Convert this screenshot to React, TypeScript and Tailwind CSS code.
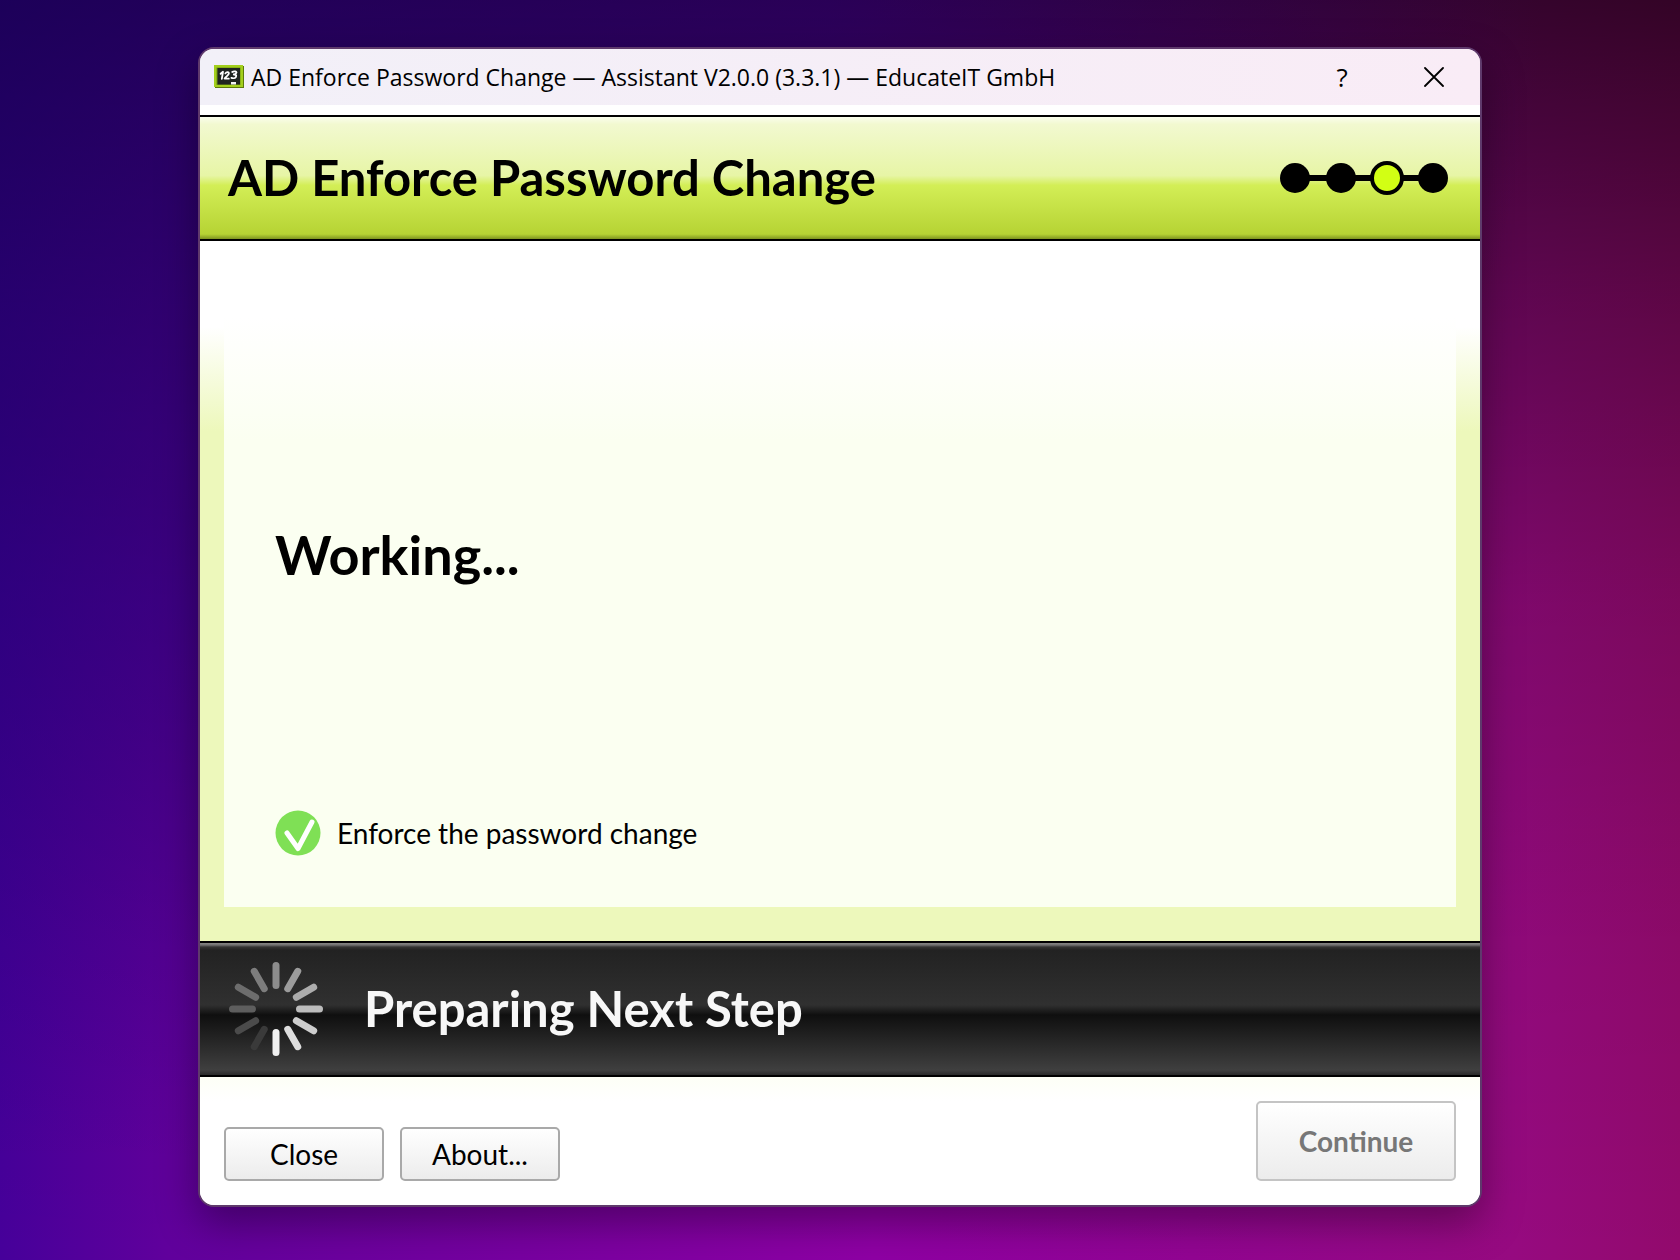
import React from 'react';

const STEPS = ['done', 'done', 'current', 'open'];

const SPOKES = [
  '#8c8c8c', '#9c9c9c', '#acacac', '#bcbcbc', '#cdcdcd', '#dedede',
  '#f0f0f0', '#3a3a3a', '#4b4b4b', '#5e5e5e', '#6d6d6d', '#7d7d7d'
];

function BoardIcon() {
  return <svg viewBox="0 0 30 24" className="h-6 w-[30px] shrink-0" aria-hidden="true">
      <rect x="1" y="1" width="29" height="22" fill="#5c7a0a" />
      <rect width="29" height="22" fill="#a3cf1c" />
      <rect x="2.5" y="2.5" width="24" height="17.5" fill="#6f9410" />
      <rect x="3.5" y="3" width="22.5" height="16.5" fill="#1f2420" />
      <g stroke="#fff" strokeWidth="1.8" fill="none" strokeLinecap="round" strokeLinejoin="round">
        <path d="M6.6 8.8 9 6.8 7.8 13.8" />
        <path d="M11.4 8.4c1-1.8 4-1.6 3.4.4-.4 1.600-3 3-4.200 4.800l4.200.1" />
        <path d="M18.200 7c1.600-1.100 4.800-.8 4.200.8-.3 1-1.600 1.500-2.600 1.700 1.600 0 3 .7 2.200 2.300-.7 1.400-3 1.700-4.600 1.100" />
      </g>
      <rect x="17" y="17" width="5" height="2.5" fill="#f4f4f4" />
    </svg>;
}

function StepIndicator() {
  return <svg viewBox="0 0 170 36" className="h-9 w-[170px] shrink-0" role="img" aria-label="Step 3 of 4">
      <rect x="17" y="15" width="138" height="6" />
      {STEPS.map((step, i) => step === 'current' ? <circle key={i} cx={17 + i * 46} cy="18" r="15" fill="#d2ff14" stroke="#000" strokeWidth="4" /> : <circle key={i} cx={17 + i * 46} cy="18" r="15" />)}
    </svg>;
}

function Spinner() {
  return <svg viewBox="0 0 96 94" className="h-[94px] w-24 shrink-0" aria-hidden="true">
      {SPOKES.map((color, i) => <rect key={i} x="44.5" y="0" width="7" height="27" rx="3.5" fill={color} transform={`rotate(${i * 30} 48 47)`} />)}
    </svg>;
}

function CheckIcon() {
  return <svg viewBox="0 0 46 46" className="h-[46px] w-[46px] shrink-0" aria-hidden="true">
      <circle cx="23" cy="23" r="22.5" fill="#7fe055" />
      <path d="M12 23 23 38.5 37 12" fill="none" stroke="#fff" strokeWidth="5" strokeLinecap="round" strokeLinejoin="round" />
    </svg>;
}

export default function App() {
  return <div className="min-h-screen w-full bg-[radial-gradient(ellipse_at_0%_0%,#20007c80_0%,#20007c70_35%,#20007c00_65%),linear-gradient(180deg,#000000a5_0%,#0000008c_8%,#0000005c_24%,#00000028_48%,#0000000c_75%,#00000000_100%),linear-gradient(90deg,#46009a_0%,#60009c_10%,#8e00a4_52%,#960a80_90%,#920a6c_100%)] px-[198px] pt-[47px] pb-[53px] font-[Lato,sans-serif] text-black">
      <main className="overflow-hidden rounded-2xl border-2 border-[#5f3a6c] bg-white shadow-[0_16px_40px_rgba(0,0,0,0.35)]">
        <div className="flex h-14 items-center bg-linear-to-r from-[#f2f0f8] to-[#f9ecf6] pl-3.5">
          <BoardIcon />
          <span className="ml-[7px] font-['Open_Sans',sans-serif] text-[23px]">
            AD Enforce Password Change — Assistant V2.0.0 (3.3.1) — EducateIT GmbH
          </span>
          <div className="ml-auto flex">
            <button type="button" aria-label="Help" className="flex h-14 w-[92px] items-center justify-center font-['Open_Sans',sans-serif] text-[26px]">
              ?
            </button>
            <button type="button" aria-label="Close window" className="flex h-14 w-[92px] items-center justify-center">
              <svg viewBox="0 0 20 20" className="h-5 w-5" stroke="#000" strokeWidth="1.8" strokeLinecap="round">
                <path d="M1 1 19 19M19 1 1 19" />
              </svg>
            </button>
          </div>
        </div>
        <header className="mt-2.5 flex h-[126px] items-center justify-between border-y-2 border-black bg-[linear-gradient(#fafdec_0%,#f2f9d0_6%,#e7f5a6_48%,#d3ee56_56%,#b6d334_96%,#7e9420_100%)] pr-8 pl-7">
          <h1 className="text-[49px] font-bold">AD Enforce Password Change</h1>
          <StepIndicator />
        </header>
        <div className="bg-[linear-gradient(#fff_86px,#edf8bb_190px)] px-6 pb-[34px]">
          <section className="flex h-[666px] flex-col bg-[linear-gradient(#fff_76px,#fbfff1_200px)] px-[51px] pt-[284px] pb-[51px]">
            <h2 className="text-[54px] leading-[60px] font-bold">Working...</h2>
            <div className="mt-auto flex items-center gap-4">
              <CheckIcon />
              <span className="text-[28px]">Enforce the password change</span>
            </div>
          </section>
        </div>
        <div role="status" className="flex h-[136px] items-center gap-10 border-y-2 border-black bg-[linear-gradient(#858585_0px,#707070_2px,#333_4px,#222_7px,#303030_62px,#0f0f0f_72px,#3f3f3f_127px,#2a2a2a_132px)] pl-7 text-[#f7f7f7]">
          <Spinner />
          <span className="text-[49px] font-bold">Preparing Next Step</span>
        </div>
        <footer className="flex items-end gap-4 bg-[linear-gradient(#fdfff6,#fff_24px)] px-6 py-6">
          <button type="button" className="h-[54px] w-40 rounded-[5px] border-2 border-[#a9a9a9] bg-linear-to-b from-white to-[#ececec] text-[28px]">
            Close
          </button>
          <button type="button" className="h-[54px] w-40 rounded-[5px] border-2 border-[#a9a9a9] bg-linear-to-b from-white to-[#ececec] text-[28px]">
            About...
          </button>
          <button type="button" disabled className="ml-auto h-20 w-[200px] rounded-[5px] border-2 border-[#c4c4c4] bg-linear-to-b from-white to-[#ececec] text-[28px] font-bold text-[#777]">
            Continue
          </button>
        </footer>
      </main>
    </div>;
}
